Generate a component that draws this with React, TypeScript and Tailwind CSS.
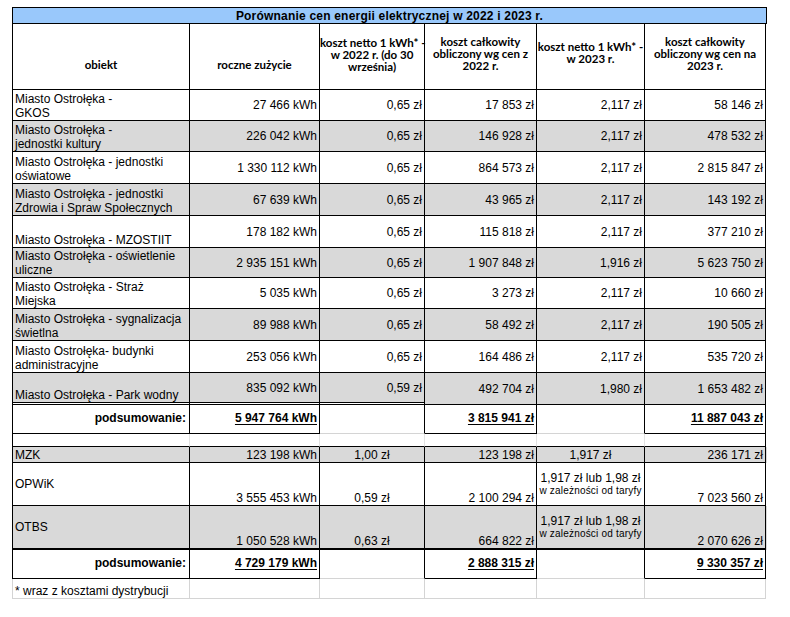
import clsx from 'clsx';

const cols = 'grid grid-cols-[178px_130px_105px_112px_108px_121px]';
const black = 'border-r border-b border-black';
const grayLine = 'border-r border-b border-[#d4d4d4]';
const grey = 'bg-[#d9d9d9]';

interface DataRow {
    name: string[];
    use: string;
    net22: string;
    tot22: string;
    net23: string;
    tot23: string;
    h: string;
}

const rows: DataRow[] = [
    { name: ['Miasto Ostrołęka -', 'GKOS'], use: '27 466 kWh', net22: '0,65 zł', tot22: '17 853 zł', net23: '2,117 zł', tot23: '58 146 zł', h: 'h-[31px]' },
    { name: ['Miasto Ostrołęka -', 'jednostki kultury'], use: '226 042 kWh', net22: '0,65 zł', tot22: '146 928 zł', net23: '2,117 zł', tot23: '478 532 zł', h: 'h-[31px]' },
    { name: ['Miasto Ostrołęka - jednostki', 'oświatowe'], use: '1 330 112 kWh', net22: '0,65 zł', tot22: '864 573 zł', net23: '2,117 zł', tot23: '2 815 847 zł', h: 'h-[32px]' },
    { name: ['Miasto Ostrołęka - jednostki', 'Zdrowia i Spraw Społecznych'], use: '67 639 kWh', net22: '0,65 zł', tot22: '43 965 zł', net23: '2,117 zł', tot23: '143 192 zł', h: 'h-[32px]' },
    { name: ['Miasto Ostrołęka - MZOSTIIT'], use: '178 182 kWh', net22: '0,65 zł', tot22: '115 818 zł', net23: '2,117 zł', tot23: '377 210 zł', h: 'h-[32px]' },
    { name: ['Miasto Ostrołęka - oświetlenie', 'uliczne'], use: '2 935 151 kWh', net22: '0,65 zł', tot22: '1 907 848 zł', net23: '1,916 zł', tot23: '5 623 750 zł', h: 'h-[30px]' },
    { name: ['Miasto Ostrołęka - Straż', 'Miejska'], use: '5 035 kWh', net22: '0,65 zł', tot22: '3 273 zł', net23: '2,117 zł', tot23: '10 660 zł', h: 'h-[31px]' },
    { name: ['Miasto Ostrołęka - sygnalizacja', 'świetlna'], use: '89 988 kWh', net22: '0,65 zł', tot22: '58 492 zł', net23: '2,117 zł', tot23: '190 505 zł', h: 'h-[32px]' },
    { name: ['Miasto Ostrołęka- budynki', 'administracyjne'], use: '253 056 kWh', net22: '0,65 zł', tot22: '164 486 zł', net23: '2,117 zł', tot23: '535 720 zł', h: 'h-[32px]' },
    { name: ['Miasto Ostrołęka - Park wodny'], use: '835 092 kWh', net22: '0,59 zł', tot22: '492 704 zł', net23: '1,980 zł', tot23: '1 653 482 zł', h: 'h-[32px]' },
];

function CityRow({ r, i }: { r: DataRow; i: number }) {
    const bg = i % 2 === 1 ? grey : 'bg-white';
    const dbl = i === rows.length - 1 ? 'border-b-[3px] border-double bg-clip-padding' : '';
    const num = clsx(black, bg, 'flex items-center justify-end pr-[2px] whitespace-nowrap');
    return (
        <div className={clsx(cols, r.h)}>
            <div className={clsx(black, 'border-l', bg, dbl, 'flex flex-col justify-end pl-[2px] whitespace-nowrap')}>
                {r.name.map(l => <span key={l}>{l}</span>)}
            </div>
            <div className={clsx(num, dbl)}>{r.use}</div>
            <div className={clsx(num, dbl)}>{r.net22}</div>
            <div className={num}>{r.tot22}</div>
            <div className={num}>{r.net23}</div>
            <div className={num}>{r.tot23}</div>
        </div>
    );
}

function SumRow({ use, tot22, tot23 }: { use: string; tot22: string; tot23: string }) {
    const val = clsx(black, 'flex items-center justify-end pr-[2px] pb-[2px] font-bold underline underline-offset-2');
    const open = 'border-r border-r-black border-b border-b-[#d4d4d4]';
    return (
        <div className={clsx(cols, 'h-[29px]')}>
            <div className={clsx(black, 'border-l flex items-center justify-end pr-[3px] pb-[2px] font-bold')}>podsumowanie:</div>
            <div className={val}>{use}</div>
            <div className={open} />
            <div className={val}>{tot22}</div>
            <div className={open} />
            <div className={val}>{tot23}</div>
        </div>
    );
}

function Tariff() {
    return (
        <div className="flex flex-col items-center pt-[1px] whitespace-nowrap">
            <span>1,917 zł lub 1,98 zł</span>
            <span className="text-[10px] leading-[11px] tracking-[0.2px]">w zależności od taryfy</span>
        </div>
    );
}

export default function App() {
    const head = clsx(black, "font-['Lato',sans-serif] font-bold text-[11.5px] leading-[12px] text-center whitespace-nowrap");
    const bottomNum = 'flex items-end justify-end pr-[2px]';
    const bottomMid = 'flex items-end justify-center';

    return (
        <div className="min-h-screen bg-white pt-[7px] pl-[12px] font-['Liberation_Sans',Arial,sans-serif] text-[12px] leading-[14px] text-black">
            <div className="w-[755px]">
                <div className="h-[17px] border border-black bg-[#99c8fb] flex items-center justify-center text-[12px] tracking-[0.2px] font-bold">
                    Porównanie cen energii elektrycznej w 2022 i 2023 r.
                </div>

                <div className={clsx(cols, 'h-[66px]')}>
                    <div className={clsx(head, 'border-l pt-[35px]')}>obiekt</div>
                    <div className={clsx(head, 'pt-[35px]')}>roczne zużycie</div>
                    <div className={clsx(head, 'pt-[13px]')}>koszt netto 1 kWh* -<br />w 2022 r. (do 30<br />września)</div>
                    <div className={clsx(head, 'pt-[12px]')}>koszt całkowity<br />obliczony wg cen z<br />2022 r.</div>
                    <div className={clsx(head, 'pt-[17px]')}>koszt netto 1 kWh* -<br />w 2023 r.</div>
                    <div className={clsx(head, 'pt-[12px]')}>koszt całkowity<br />obliczony wg cen na<br />2023 r.</div>
                </div>

                {rows.map((r, i) => <CityRow key={i} r={r} i={i} />)}

                <SumRow use="5 947 764 kWh" tot22="3 815 941 zł" tot23="11 887 043 zł" />

                {/* pusty wiersz */}
                <div className={clsx(cols, 'h-[13px]')}>
                    <div className="border-l border-l-black border-r border-r-[#e2e2e2] border-b border-b-black" />
                    <div className="border-r border-r-[#e2e2e2] border-b border-b-black" />
                    <div className="border-r border-r-[#e2e2e2] border-b border-b-black" />
                    <div className="border-r border-r-[#e2e2e2] border-b border-b-black" />
                    <div className="border-r border-r-[#e2e2e2] border-b border-b-black" />
                    <div className="border-r border-b border-black" />
                </div>

                <div className={clsx(cols, 'h-[16px]', grey)}>
                    <div className={clsx(black, 'border-l flex items-center pl-[2px]')}>MZK</div>
                    <div className={clsx(black, 'flex items-center justify-end pr-[2px]')}>123 198 kWh</div>
                    <div className={clsx(black, 'flex items-center justify-center')}>1,00 zł</div>
                    <div className={clsx(black, 'flex items-center justify-end pr-[2px]')}>123 198 zł</div>
                    <div className={clsx(black, 'flex items-center justify-center')}>1,917 zł</div>
                    <div className={clsx(black, 'flex items-center justify-end pr-[2px]')}>236 171 zł</div>
                </div>

                <div className={clsx(cols, 'h-[43px]')}>
                    <div className={clsx(black, 'border-l flex items-center pl-[2px]')}>OPWiK</div>
                    <div className={clsx(black, bottomNum)}>3 555 453 kWh</div>
                    <div className={clsx(black, bottomMid)}>0,59 zł</div>
                    <div className={clsx(black, bottomNum)}>2 100 294 zł</div>
                    <div className={clsx(black, 'flex items-center justify-center pb-[2px]')}><Tariff /></div>
                    <div className={clsx(black, bottomNum)}>7 023 560 zł</div>
                </div>

                <div className={clsx(cols, 'h-[44px]', grey)}>
                    <div className={clsx(black, 'border-l border-b-2 flex items-center pl-[2px]')}>OTBS</div>
                    <div className={clsx(black, 'border-b-2', bottomNum)}>1 050 528 kWh</div>
                    <div className={clsx(black, 'border-b-2', bottomMid)}>0,63 zł</div>
                    <div className={clsx(black, 'border-b-2', bottomNum)}>664 822 zł</div>
                    <div className={clsx(black, 'border-b-2 flex items-center justify-center pb-[2px]')}><Tariff /></div>
                    <div className={clsx(black, 'border-b-2', bottomNum)}>2 070 626 zł</div>
                </div>

                <SumRow use="4 729 179 kWh" tot22="2 888 315 zł" tot23="9 330 357 zł" />

                <div className={clsx(cols, 'h-[20px]')}>
                    <div className={clsx(grayLine, 'border-l flex items-end pl-[2px] whitespace-nowrap')}>* wraz z kosztami dystrybucji</div>
                    <div className={grayLine} />
                    <div className={grayLine} />
                    <div className={grayLine} />
                    <div className={grayLine} />
                    <div className={grayLine} />
                </div>
            </div>
        </div>
    );
}
